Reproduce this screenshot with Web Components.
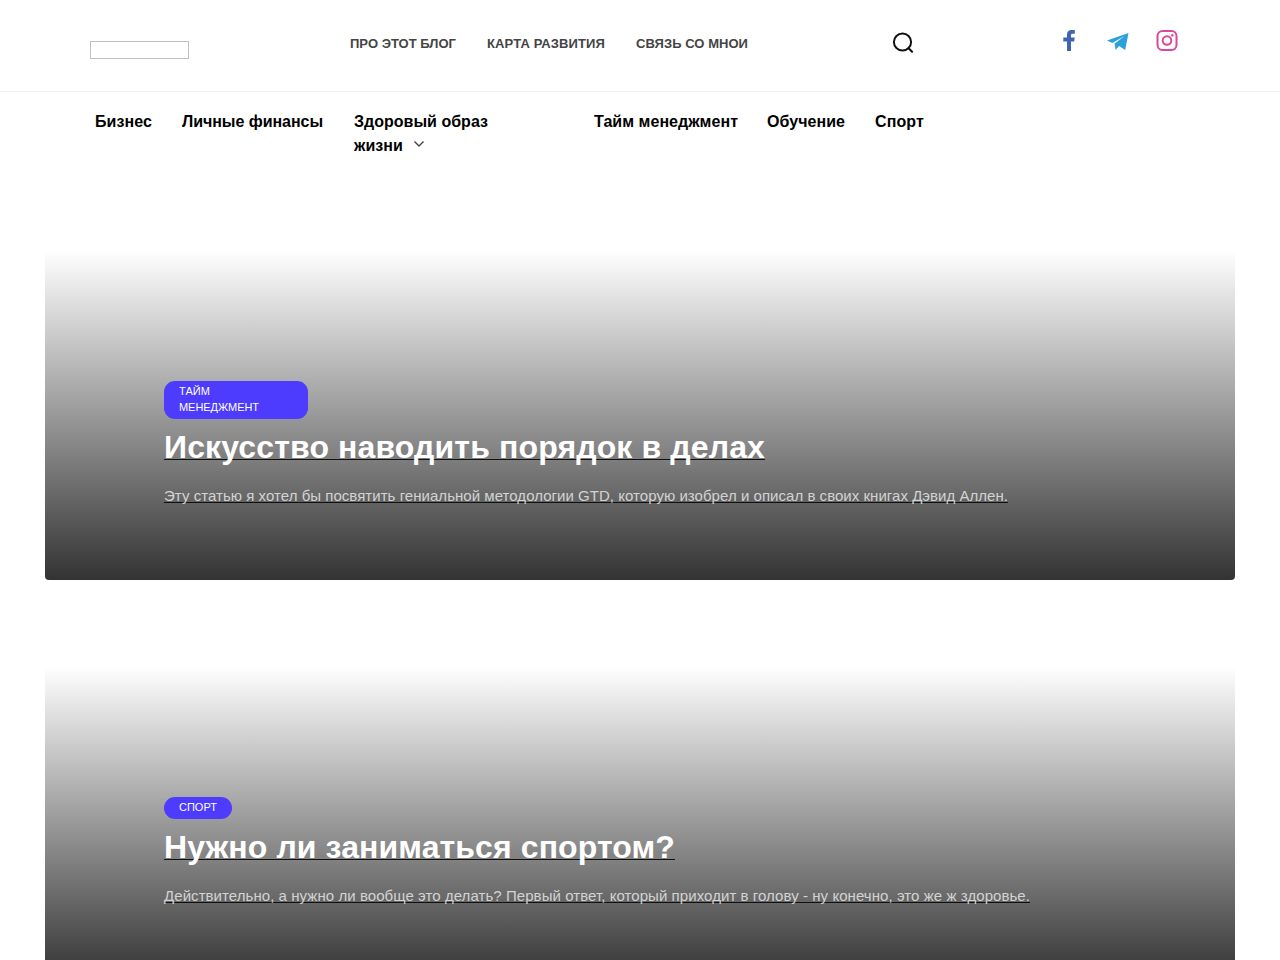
<!DOCTYPE html>
<html lang="ru"><head><meta charset="utf-8"><title>Блог</title>
<style>
body{margin:0;background:#fff;font-family:"Liberation Sans",Arial,sans-serif}
</style></head><body>
<blog-page></blog-page>
<script>
const define=(name,html)=>customElements.define(name,class extends HTMLElement{
  constructor(){super();this.attachShadow({mode:'open'}).innerHTML=html;}
});

// Tracks its letters so that the line takes the width given in "w".
customElements.define('fit-text',class extends HTMLElement{
  constructor(){super();this.attachShadow({mode:'open'}).innerHTML=
    '<style>:host{display:block;width:max-content;white-space:nowrap}</style><slot></slot>';}
  connectedCallback(){
    const w=+this.getAttribute('w'),n=this.textContent.length;
    this.style.letterSpacing=(w-this.getBoundingClientRect().width)/n+'px';
  }
});

define('site-header',`<style>
:host{display:block;border-bottom:1px solid #f1f1f1}
.in{display:flex;align-items:flex-start;padding-left:90px;height:91px;box-sizing:border-box}
.logo{width:97px;height:16px;border:1px solid #c0c0c0;margin-top:41px}
nav{display:flex;gap:31px;width:400px;margin:36px 0 0 161px;font:bold 13px/15px "Liberation Sans",sans-serif;color:#444}
.cut{clip-path:inset(2.5px 0 0 0)}
.s{margin:31px 0 0 142px;width:24px;height:24px}
.soc{display:flex;gap:25px;margin:28px 0 0 141px}
svg{display:block}
</style><div class="in"><div class="logo"></div>
<nav><fit-text w="106">ПРО ЭТОТ БЛОГ</fit-text><fit-text w="118">КАРТА РАЗВИТИЯ</fit-text><fit-text class="cut" w="112">СВЯЗЬ СО МНОЙ</fit-text></nav>
<svg class="s" viewBox="0 0 24 24" fill="none" stroke="#111" stroke-width="2" stroke-linecap="round"><circle cx="10.5" cy="11" r="8.600"/><path d="M16.600 17.200l3.500 3.500"/></svg>
<div class="soc"><slot></slot></div></div>`);

define('top-menu',`<style>
:host{display:flex;height:158px;box-sizing:border-box;padding:18px 0 0 95px;font:bold 16px/24px "Liberation Sans",sans-serif;color:#000}
fit-text{margin-right:30px}
.sub{width:210px;margin:0 30px 0 1px}
.row{display:flex;align-items:center}
svg{margin-left:10px;margin-top:-4px}
</style>
<fit-text w="57">Бизнес</fit-text><fit-text w="141">Личные финансы</fit-text>
<div class="sub"><fit-text w="134">Здоровый образ</fit-text><div class="row"><fit-text style="margin:0" w="49">жизни</fit-text><svg width="12" height="8" fill="none" stroke="#444" stroke-width="1.4"><path d="M1.5 1.5L6 6l4.500-4.500"/></svg></div></div>
<fit-text style="margin-right:29px" w="144">Тайм менеджмент</fit-text><fit-text w="78">Обучение</fit-text><fit-text w="49">Спорт</fit-text>`);

define('post-card',`<style>
:host{display:block;flex:none;box-sizing:border-box;margin:0 45px 86px;padding:131px 119px 0;border-radius:4px;background:linear-gradient(rgba(0,0,0,0),rgba(0,0,0,.8))}
.badge{width:max-content;box-sizing:border-box;padding:2px 15px 4px;border-radius:11px;background:#4d3bfe;color:#fff;font-size:11px;line-height:16px}
:host([wide]) .badge{width:144px}
.t{font-size:32px;line-height:38px;font-weight:bold;color:#fff;margin-top:9px}
.d{font-size:15px;line-height:20px;color:#d3d3d3;margin-top:20px;padding-bottom:74px}
.t,.d{text-decoration:underline 1px #111;text-decoration-skip-ink:none;text-underline-offset:1px}
</style><div class="badge"><slot name="tag"></slot></div><div class="t"><slot name="title"></slot></div><div class="d"><slot name="text"></slot></div>`);

define('blog-page',`<style>:host{display:block;height:960px;overflow:hidden}</style>
<site-header>
<svg width="24" height="24" viewBox="0 0 24 24"><path fill="#4264b0" d="M10 23v-9.500H6.300V9.600H10V6.600C10 3.500 11.800 2 14.500 2h3.300v3.700h-2.200c-1.200 0-1.600.5-1.600 1.700v2.200h3.700l-.5 3.900H14V23z"/></svg>
<svg width="24" height="24" viewBox="0 0 24 24"><path fill="#2aa1da" d="M1 12.500L22.500 5 19.200 22l-6.200-4-3.200 4-1.300-6.300L18.500 8 6.300 14.900z"/></svg>
<svg width="24" height="24" viewBox="0 0 24 24" fill="none" stroke="#d9489a" stroke-width="2"><rect x="2.500" y="3" width="19" height="19" rx="5"/><circle cx="12" cy="12.500" r="4.300"/><circle cx="17.400" cy="7.200" r="1.200" fill="#d9489a" stroke="none"/></svg>
</site-header>
<top-menu></top-menu>
<post-card wide><div slot="tag"><fit-text w="31">ТАЙМ</fit-text><fit-text w="80">МЕНЕДЖМЕНТ</fit-text></div>
<fit-text slot="title" w="601">Искусство наводить порядок в делах</fit-text>
<fit-text slot="text" w="844">Эту статью я хотел бы посвятить гениальной методологии GTD, которую изобрел и описал в своих книгах Дэвид Аллен.</fit-text></post-card>
<post-card><fit-text slot="tag" w="38">СПОРТ</fit-text>
<fit-text slot="title" w="511">Нужно ли заниматься спортом?</fit-text>
<fit-text slot="text" w="866">Действительно, а нужно ли вообще это делать? Первый ответ, который приходит в голову - ну конечно, это же ж здоровье.</fit-text></post-card>`);
</script></body></html>
